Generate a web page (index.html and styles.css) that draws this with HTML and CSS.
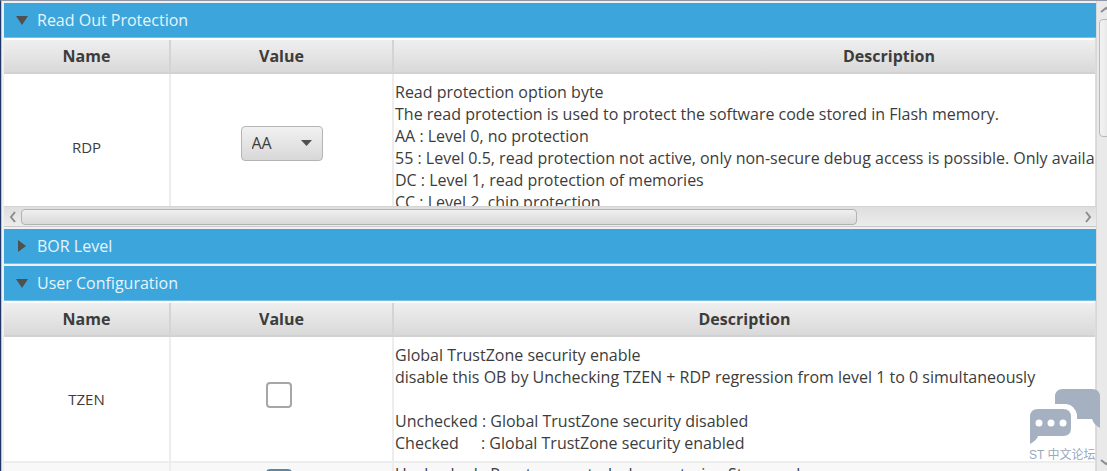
FILE: index.html
```
<!DOCTYPE html>
<html lang="en">
<head>
    <meta charset="UTF-8">
    <meta name="viewport" content="width=device-width, initial-scale=1.0">
    <title>Option bytes</title>
    <link rel="stylesheet" href="styles.css">
</head>
<body>

    <div class="window">
        <main class="panels">
            <section class="panel">
                <button class="panel-title" type="button" aria-expanded="true">
                    <svg class="arrow" viewBox="0 0 12 12"><path d="M0 2h12L6 11z"/></svg>
                    Read Out Protection
                </button>
                <div class="panel-body short">
                    <table class="options wide">
                        <thead>
                            <tr><th class="col-name">Name</th><th class="col-value">Value</th><th>Description</th></tr>
                        </thead>
                        <tbody>
                            <tr class="row-rdp">
                                <td class="name"><label for="rdp">RDP</label></td>
                                <td class="value">
                                    <select id="rdp" class="combo">
                                        <option>AA</option>
                                        <option>55</option>
                                        <option>DC</option>
                                        <option>CC</option>
                                    </select>
                                </td>
                                <td class="description">Read protection option byte
The read protection is used to protect the software code stored in Flash memory.
AA : Level 0, no protection
55 : Level 0.5, read protection not active, only non-secure debug access is possible. Only available
DC : Level 1, read protection of memories
CC : Level 2, chip protection</td>
                            </tr>
                        </tbody>
                    </table>
                </div>
                <div class="scroll-x">
                    <button class="scroll-button" type="button" aria-label="Scroll left">
                        <svg viewBox="0 0 8 12"><path d="M6 1L2 6l4 5"/></svg>
                    </button>
                    <div class="track-x"><div class="thumb-x"></div></div>
                    <button class="scroll-button" type="button" aria-label="Scroll right">
                        <svg viewBox="0 0 8 12"><path d="M2 1l4 5-4 5"/></svg>
                    </button>
                </div>
            </section>

            <section class="panel">
                <button class="panel-title" type="button" aria-expanded="false">
                    <svg class="arrow" viewBox="0 0 12 12"><path d="M2 0v12l8-6z"/></svg>
                    BOR Level
                </button>
            </section>

            <section class="panel">
                <button class="panel-title" type="button" aria-expanded="true">
                    <svg class="arrow" viewBox="0 0 12 12"><path d="M0 2h12L6 11z"/></svg>
                    User Configuration
                </button>
                <div class="panel-body">
                    <table class="options">
                        <thead>
                            <tr><th class="col-name">Name</th><th class="col-value">Value</th><th>Description</th></tr>
                        </thead>
                        <tbody>
                            <tr class="row-tzen">
                                <td class="name"><label for="tzen">TZEN</label></td>
                                <td class="value"><input id="tzen" class="check" type="checkbox"></td>
                                <td class="description">Global TrustZone security enable
disable this OB by Unchecking TZEN + RDP regression from level 1 to 0 simultaneously

Unchecked : Global TrustZone security disabled
<span class="state">Checked</span>: Global TrustZone security enabled</td>
                            </tr>
                            <tr class="row-stop">
                                <td class="name"></td>
                                <td class="value"><input class="check" type="checkbox" aria-label="Reset on Stop mode" checked></td>
                                <td class="description">Unchecked : Reset generated when entering Stop mode</td>
                            </tr>
                        </tbody>
                    </table>
                </div>
            </section>
        </main>

        <div class="scroll-y">
            <button class="scroll-button" type="button" aria-label="Scroll up">
                <svg viewBox="0 0 12 8"><path d="M1 6l5-4 5 4"/></svg>
            </button>
            <div class="track-y"><div class="thumb-y"></div></div>
            <button class="scroll-button" type="button" aria-label="Scroll down">
                <svg viewBox="0 0 12 8"><path d="M1 2l5 4 5-4"/></svg>
            </button>
        </div>
    </div>

    <div class="watermark">
        <svg viewBox="0 0 72 56">
            <path d="M34 0H63Q71 0 71 8V39Q65 36 63 30H48V26Q46 16 37 15H26V8Q26 0 34 0z"/>
            <path d="M9 20H34Q42 20 42 28V39Q42 47 34 47H9Q8 51 1 55V28Q1 20 9 20z"/>
            <g class="dots"><circle cx="10" cy="34" r="3.5"/><circle cx="22" cy="34" r="3.5"/><circle cx="34" cy="34" r="3.5"/></g>
        </svg>
        <span>ST 中文论坛</span>
    </div>

</body>
</html>
```
FILE: styles.css
```
* {
    box-sizing: border-box;
}
body {
    margin: 0;
    height: 100vh;
    overflow: hidden;
    font-family: "Open Sans", "Noto Sans CJK SC", sans-serif;
    font-size: 16px;
    line-height: 22px;
    color: #3c3c3c;
    background-color: #e8e8e8;
}
button, select {
    font: inherit;
    color: inherit;
}
.window {
    display: flex;
    height: 100vh;
    overflow: hidden;
    border-top: 1px solid #8f96a8;
    border-left: 1px solid #1c3668;
}
.panels {
    flex: 1;
    min-width: 0;
    padding-top: 2px;
    padding-left: 2px;
    border-left: 1px solid #c4c4c8;
    background-color: #f0f0f2;
}
.panel {
    margin-bottom: 2px;
}
.panel-title {
    display: flex;
    align-items: center;
    gap: 9px;
    width: 100%;
    height: 35px;
    padding: 0 12px;
    border: none;
    border-bottom: 1px solid #74c0e6;
    background-color: #3ca6dc;
    color: #e6f4fb;
    text-align: left;
}
.arrow {
    width: 12px;
    height: 12px;
    fill: #505050;
}
.panel-body {
    overflow: hidden;
    padding-top: 2px;
    background-color: white;
    border-right: 1px solid #dcdcdc;
}
.short {
    height: 168px;
}
.options {
    width: 100%;
    table-layout: fixed;
    border-collapse: separate;
    border-spacing: 0;
}
.wide {
    width: 1380px;
}
th {
    height: 34px;
    padding: 0;
    font-weight: bold;
    border-right: 2px solid #d4d4d4;
    border-bottom: 2px solid #d2d2d2;
    background: linear-gradient(#efefef, #d9d9d9);
}
td {
    padding: 0;
    border-right: 2px solid #ededed;
    border-bottom: 2px solid #ededed;
    background-color: white;
}
th:last-child, td:last-child {
    border-right: none;
}
.col-name {
    width: 167px;
}
.col-value {
    width: 223px;
}
.name {
    font-size: 15px;
    text-align: center;
}
.value {
    padding-bottom: 8px;
    text-align: center;
}
.description {
    padding-left: 1px;
    white-space: pre;
    overflow: hidden;
}
.state {
    display: inline-block;
    width: 86px;
}
.row-rdp {
    height: 148px;
}
.row-tzen {
    height: 126px;
}
.row-stop {
    height: 124px;
}
.row-stop td {
    background-color: #f8f8f8;
    vertical-align: top;
}
.row-stop .value {
    padding-top: 6px;
}
.row-tzen .value, .row-stop .value {
    padding-right: 6px;
}
.combo {
    appearance: none;
    width: 82px;
    height: 35px;
    padding: 0 10px;
    border: 1px solid #b4b4b4;
    border-radius: 4px;
    background: url("data:image/svg+xml,%3Csvg xmlns='http://www.w3.org/2000/svg' width='11' height='6'%3E%3Cpath d='M0 0h11L5.5 6z' fill='%23505050'/%3E%3C/svg%3E") no-repeat right 10px center, linear-gradient(#f1f1f1, #d8d8d8);
}
.check {
    appearance: none;
    display: block;
    width: 26px;
    height: 26px;
    margin: 0 auto;
    border: 2px solid #a6a6a6;
    border-radius: 4px;
    background-color: white;
}
.check:checked {
    border-color: #5b87a5;
    background-color: #3ca6dc;
}
.scroll-button {
    display: flex;
    align-items: center;
    justify-content: center;
    padding: 0;
    border: none;
    background: none;
}
.scroll-button svg {
    fill: none;
    stroke: #8c8c8c;
    stroke-width: 2;
}
.scroll-x {
    display: flex;
    height: 21px;
    border-top: 1px solid #d4d4d4;
    border-bottom: 1px solid #cacaca;
    background: linear-gradient(#dedede, #ececec);
}
.scroll-x .scroll-button {
    width: 17px;
}
.scroll-x svg {
    width: 8px;
    height: 12px;
}
.track-x {
    flex: 1;
    padding: 2px 0;
}
.thumb-x {
    width: 79%;
    height: 16px;
    border: 1px solid #b2b2b2;
    border-radius: 4px;
    background: linear-gradient(#efefef, #d9d9d9);
}
.scroll-y {
    display: flex;
    flex-direction: column;
    width: 11px;
    border-left: 1px solid #d8d8d8;
    background-color: #e9e9e9;
}
.scroll-y .scroll-button {
    justify-content: flex-start;
    height: 18px;
    padding-left: 3px;
}
.scroll-y svg {
    flex: none;
    width: 12px;
    height: 8px;
}
.track-y {
    flex: 1;
    padding-left: 2px;
}
.thumb-y {
    width: 16px;
    height: 118px;
    border: 1px solid #b8b8b8;
    border-radius: 4px;
    background: linear-gradient(to right, #f3f3f3, #dedede);
}
/* forum mark laid over the lower right corner */
.watermark {
    position: absolute;
    right: 8px;
    bottom: 6px;
    width: 72px;
    padding-left: 2px;
    font-family: "Liberation Sans", "Noto Sans CJK SC", sans-serif;
    font-size: 12px;
    line-height: 20px;
    color: #9aa8bd;
    white-space: nowrap;
}
.watermark svg {
    display: block;
    width: 72px;
    height: 56px;
    fill: #a5b1c0;
}
.watermark .dots {
    fill: white;
}
```
